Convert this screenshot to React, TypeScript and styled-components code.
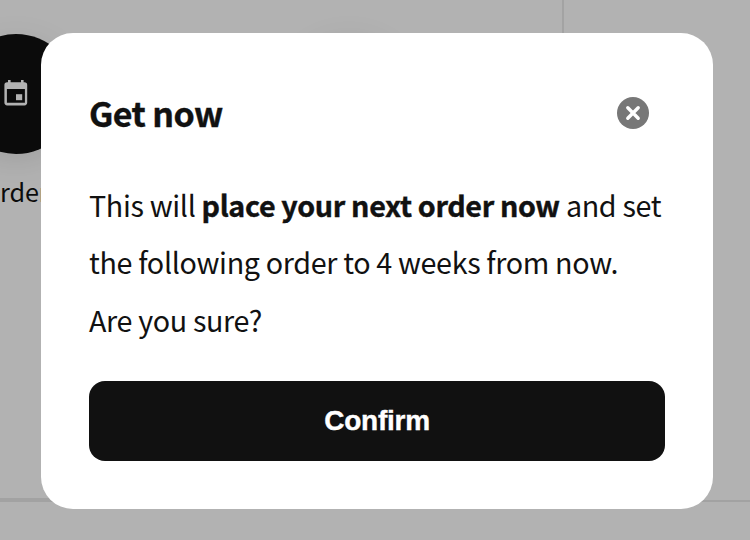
import React from "react";
import styled, { createGlobalStyle } from "styled-components";

const GlobalStyle = createGlobalStyle`
  * { box-sizing: border-box; }
  body {
    margin: 0;
    color: #111;
    font-family: "Noto Sans CJK SC", "Noto Sans", sans-serif;
    overflow: hidden;
  }
`;

const Page = styled.div`
  position: relative;
  width: 750px;
  height: 540px;
  overflow: hidden;
  background: #fff;
`;

const Board = styled.main`
  display: grid;
  grid-template-columns: 564px 1fr;
  height: 502px;
`;

const Actions = styled.section`
  display: flex;
  gap: 213px;
  padding-top: 34px;
  border-right: 2px solid #eaeaea;
  border-bottom: 4px solid #e8e8e8;
`;

const Aside = styled.section`
  border-bottom: 2px solid #e8e8e8;
`;

const Action = styled.div`
  flex: none;
  display: flex;
  flex-direction: column;
  width: 120px;

  &:first-child {
    margin-left: -44px;
  }
`;

const ActionCircle = styled.div`
  flex: none;
  display: grid;
  place-items: center;
  width: 120px;
  height: 120px;
  padding-bottom: 2px;
  border-radius: 50%;
  background: #111;
  box-shadow: 0 8px 32px rgba(0, 0, 0, 0.1);
`;

const ActionLabel = styled.span`
  margin-top: 17px;
  padding-left: 44px;
  font-size: 25.2px;
  line-height: 40px;
  letter-spacing: -0.1px;
`;

const Overlay = styled.div`
  position: absolute;
  inset: 0;
  padding: 33px 37px 31px 41px;
  background: rgba(0, 0, 0, 0.3);
`;

const Dialog = styled.div`
  display: flex;
  flex-direction: column;
  width: 672px;
  height: 476px;
  padding: 48px;
  border-radius: 32px;
  background: #fff;
`;

const Header = styled.header`
  display: flex;
  align-items: center;
  justify-content: space-between;
  height: 64px;
  padding-right: 16px;
`;

const Title = styled.h2`
  margin: 0;
  font-size: 34px;
  font-weight: 700;
  line-height: 64px;
  letter-spacing: -0.6px;
  -webkit-text-stroke: 0.4px #111;
`;

const CloseButton = styled.button`
  display: block;
  width: 32px;
  height: 32px;
  padding: 0;
  border: 0;
  background: none;

  svg {
    display: block;
  }
`;

const Message = styled.p`
  margin: 31px 0 0;
  font-size: 28.7px;
  line-height: 57.4px;
  letter-spacing: -0.34px;
  white-space: nowrap;

  b {
    letter-spacing: -0.35px;
    -webkit-text-stroke: 0.4px #111;
  }
`;

const ConfirmButton = styled.button`
  height: 80px;
  margin-top: auto;
  padding: 0 0 1px;
  border: 0;
  border-radius: 16px;
  background: #111;
  color: #fff;
  font: 700 28px "Liberation Sans", Arial, sans-serif;
  letter-spacing: -0.25px;
  -webkit-text-stroke: 0.4px #fff;
`;

function CalendarIcon() {
  return (
    <svg width="24" height="26" viewBox="0 0 24 26">
      <path d="M4 0h2.6v4H4zM17 0h2.6v4H17z" fill="#fff" />
      <path
        fillRule="evenodd"
        d="M3.2 2.2h17.2a2.8 2.8 0 0 1 2.8 2.8v17.6a2.8 2.8 0 0 1-2.8 2.8H3.2A2.8 2.8 0 0 1 .4 22.6V5a2.8 2.8 0 0 1 2.8-2.8zM2.9 9v13.8h18V9z"
        fill="#fff"
      />
      <path d="M12 14.2h6.2v6H12z" fill="#fff" />
    </svg>
  );
}

export default function App() {
  return (
    <>
      <GlobalStyle />
      <Page>
        <Board>
          <Actions>
            <Action>
              <ActionCircle>
                <CalendarIcon />
              </ActionCircle>
              <ActionLabel>rder</ActionLabel>
            </Action>
            <Action>
              <ActionCircle />
            </Action>
          </Actions>
          <Aside />
        </Board>
        <Overlay>
          <Dialog role="dialog" aria-modal="true">
            <Header>
              <Title>Get now</Title>
              <CloseButton aria-label="Close">
                <svg width="32" height="32" viewBox="0 0 32 32">
                  <circle cx="16" cy="16" r="16" fill="#777" />
                  <path
                    d="M10.8 10.8l10.4 10.4M21.2 10.8L10.8 21.2"
                    stroke="#fff"
                    strokeWidth="3.4"
                    strokeLinecap="round"
                  />
                </svg>
              </CloseButton>
            </Header>
            <Message>
              This will <b>place your next order now</b> and set
              <br />
              the following order to 4 weeks from now.
              <br />
              Are you sure?
            </Message>
            <ConfirmButton>Confirm</ConfirmButton>
          </Dialog>
        </Overlay>
      </Page>
    </>
  );
}
